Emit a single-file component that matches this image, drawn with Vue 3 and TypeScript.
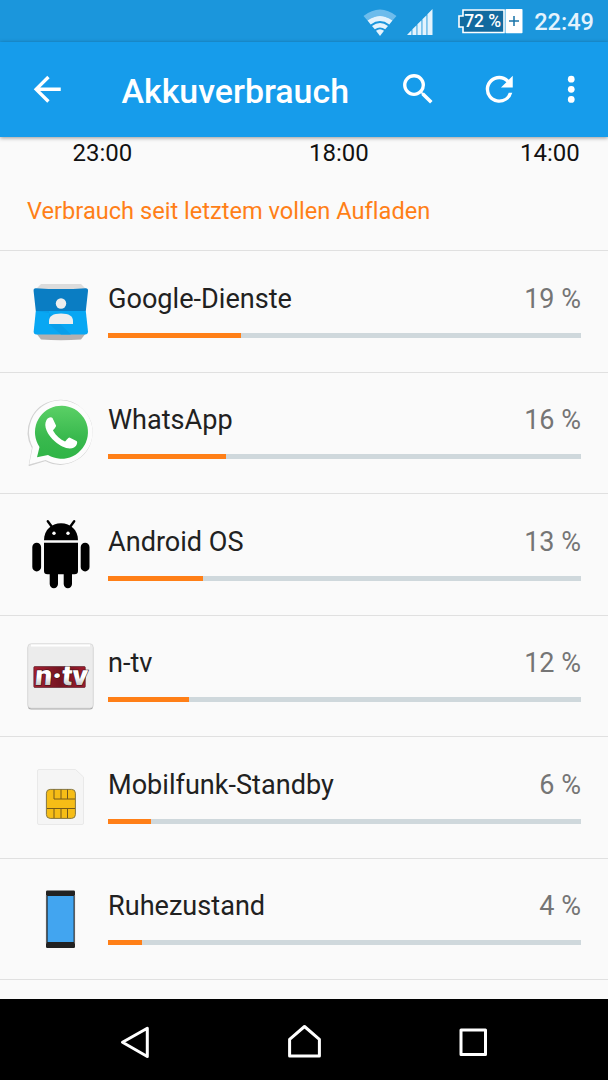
<script setup lang="ts">
interface Consumer {
  id: string
  name: string
  percent: number
  fill: number
}

const consumers: Consumer[] = [
  { id: 'google', name: 'Google-Dienste', percent: 19, fill: 132.7 },
  { id: 'whatsapp', name: 'WhatsApp', percent: 16, fill: 118.3 },
  { id: 'android', name: 'Android OS', percent: 13, fill: 94.6 },
  { id: 'ntv', name: 'n-tv', percent: 12, fill: 81 },
  { id: 'sim', name: 'Mobilfunk-Standby', percent: 6, fill: 43 },
  { id: 'idle', name: 'Ruhezustand', percent: 4, fill: 34 },
]

const hours: string[] = ['23:00', '18:00', '14:00']
</script>

<template>
  <div class="screen">
    <div class="status">
      <svg class="wifi" width="34" height="28" viewBox="0 0 34 28">
        <path d="M.5 7Q17-6 33.500 7L29.500 11.500Q17 2.500 4.500 11.500Z" fill="#6dbcec" />
        <path d="M4.500 11.500Q17 2.500 29.500 11.500L26.300 15.400Q17 8.700 7.700 15.400Z" fill="#e4f3fd" />
        <path d="M9 17Q17 11 25 17L22.200 20.300Q17 16.500 11.800 20.300Z" fill="#e4f3fd" />
        <path d="M13 21.800Q17 18.800 21 21.800L17 27Z" fill="#e4f3fd" />
      </svg>
      <svg class="signal" width="26" height="26" viewBox="0 0 26 26">
        <path d="M0 26L4.500 21.200V26ZM5.400 20.300L9.500 16.200V26H5.400ZM10.400 15.300L14.500 11.200V26H10.400ZM15.400 10.300L19.500 6.200V26H15.400ZM20.400 5.300L25.500 0V26H20.400Z" fill="#e4f3fd" />
      </svg>
      <div class="battery">
        <svg width="65" height="25" viewBox="0 0 65 25">
          <path d="M5 1H46V23.500H5V18H1V7H5Z" fill="#126a9f" stroke="#fff" stroke-width="1.600" />
          <rect x="47.500" y="0" width="17" height="24.300" rx=".8" fill="#fff" />
          <path d="M51 12H61M56 7V17" stroke="#1873a8" stroke-width="1.500" />
        </svg>
        <span class="level">72 %</span>
      </div>
      <span class="clock">22:49</span>
    </div>

    <header class="toolbar">
      <svg class="tool" viewBox="0 0 24 24"><path d="M20 11H7.830l5.590-5.590L12 4l-8 8 8 8 1.410-1.410L7.830 13H20z" /></svg>
      <h1>Akkuverbrauch</h1>
      <svg class="tool search" viewBox="0 0 24 24"><path d="M15.500 14h-.79l-.28-.27A6.471 6.471 0 0 0 16 9.500 6.500 6.500 0 1 0 9.500 16c1.610 0 3.090-.59 4.230-1.570l.27.28v.79l5 4.990L20.490 19l-4.990-5zm-6 0C7.010 14 5 11.990 5 9.500S7.010 5 9.500 5 14 7.010 14 9.500 11.990 14 9.500 14z" /></svg>
      <svg class="tool refresh" viewBox="0 0 24 24"><path d="M17.650 6.350A7.958 7.958 0 0 0 12 4a8 8 0 1 0 7.730 10h-2.080A5.990 5.990 0 0 1 12 18c-3.310 0-6-2.690-6-6s2.690-6 6-6c1.660 0 3.140.69 4.220 1.780L13 11h7V4l-2.350 2.350z" /></svg>
      <svg class="tool more" viewBox="0 0 24 24"><circle cx="12" cy="6" r="2" /><circle cx="12" cy="12" r="2" /><circle cx="12" cy="18" r="2" /></svg>
    </header>

    <main>
      <div class="hours"><span v-for="h in hours" :key="h">{{ h }}</span></div>
      <h2>Verbrauch seit letztem vollen Aufladen</h2>
      <ul>
        <li v-for="c in consumers" :key="c.id">
          <svg class="icon" width="68" height="68" viewBox="0 0 68 68">
            <g v-if="c.id === 'google'">
              <path d="M14 6H54L59 11H9Z" fill="#dcdcdc" />
              <path d="M9 55H59L54 61.500Q34 63 14 61.500Z" fill="#b4b0af" />
              <path d="M8.800 33L6.600 13Q6.300 10 9 10.200Q34 12 58.500 10.200Q61.300 10 61 13L58.800 33Z" fill="#0a7dc3" />
              <path d="M8.800 33H58.800L61 53.500Q61 56.500 58 56.500H9.500Q6.500 56.500 6.700 53.500Z" fill="#08a7f3" />
              <path d="M9 33H22V46L34 56.500H44L22 35Z" fill="#089eea" />
              <circle cx="34" cy="25.500" r="5.200" fill="#eee" />
              <path d="M22 46V43Q22 35.500 34 35.500Q46 35.500 46 43V46Z" fill="#eee" />
            </g>
            <g v-else-if="c.id === 'whatsapp'">
              <path d="M2.200 65.500L5.500 48A31.800 31.800 0 1 1 18.500 60.500Z" fill="#d0d0d0" stroke="#d2d2d2" stroke-width="1.200" stroke-linejoin="round" />
              <path d="M2.200 64.500L5.700 47A31.800 31.800 0 1 1 18.500 60Z" fill="#fcfcfc" />
              <path d="M10 57.200L12.500 47A26.500 26.500 0 1 1 21 55Z" fill="url(#waGreen)" />
              <path d="M19.500 20C21 17.500 24 16.500 25.500 18L29 25.500C29.500 27 26 30 26 30.500C29 36 33.500 39.500 38 41.500C39 41 41 37.500 42.500 37.500L49.500 41C51 42 50 46 47 47.500C42 50 34 47 28 41.500C20.500 35 16 26 19.500 20Z" fill="#fff" />
              <defs>
                <linearGradient id="waGreen" x1="0" y1="0" x2="0" y2="1">
                  <stop offset="0" stop-color="#5bd066" /><stop offset=".6" stop-color="#39b94e" /><stop offset="1" stop-color="#2fb446" />
                </linearGradient>
              </defs>
            </g>
            <g v-else-if="c.id === 'android'">
              <path d="M17 19.300C17 9 24.500 2.300 34 2.300S51 9 51 19.300Z" />
              <path d="M20.800 .3L25 6M47.200 .3L43 6" stroke="#000" stroke-width="2.400" stroke-linecap="round" />
              <path d="M17 21.700H51V50Q51 53.200 47.500 53.200H45V63A4.150 4.150 0 0 1 36.700 63V53.200H31V63A4.150 4.150 0 0 1 22.700 63V53.200H20.500Q17 53.200 17 50Z" />
              <rect x="5.300" y="21.700" width="8.800" height="28.700" rx="4.400" />
              <rect x="53.700" y="21.700" width="8.800" height="28.700" rx="4.400" />
              <circle cx="27" cy="12.300" r="1.700" fill="#fff" /><circle cx="41" cy="12.300" r="1.700" fill="#fff" />
            </g>
            <g v-else-if="c.id === 'ntv'">
              <rect x=".8" y="1.500" width="65.400" height="65" rx="3.500" fill="#aaa" />
              <rect x=".8" y=".7" width="65.400" height="64.500" rx="3.500" fill="#ececec" stroke="#d2d2d2" stroke-width=".7" />
              <path d="M4 2.500H63" stroke="#fff" stroke-width="2" />
              <rect x="6.800" y="23.500" width="51.500" height="21" rx="1" fill="url(#ntvRed)" stroke="#4d1a22" stroke-width=".6" />
              <text class="ntv-mark" transform="translate(7.500 41.800) skewX(-5)" textLength="52.500" lengthAdjust="spacingAndGlyphs">n·tv</text>
              <defs>
                <linearGradient id="ntvRed"><stop offset="0" stop-color="#a51f30" /><stop offset=".5" stop-color="#741421" /><stop offset="1" stop-color="#9d1b2c" /></linearGradient>
                <linearGradient id="ntvWhite" x1="0" y1="0" x2="0" y2="1"><stop offset=".55" stop-color="#fff" /><stop offset=".85" stop-color="#bbb" /></linearGradient>
              </defs>
            </g>
            <g v-else-if="c.id === 'sim'">
              <path d="M12 5.500H48.500L56.500 13V59Q56.500 60.500 55 60.500H12Q10.500 60.500 10.500 59V7Q10.500 5.500 12 5.500Z" fill="#f5f5f5" stroke="#e9e9e9" />
              <rect x="19.400" y="25.400" width="29" height="29" rx="3.800" fill="#f6bd16" stroke="#857641" stroke-width="1" />
              <path d="M27 25.500V35H48M34 25.500V35M40.500 25.500V35M20 44.500H48M27 44.500V54M34 44.500V54M40.500 44.500V54" fill="none" stroke="#75591a" stroke-width="1" />
            </g>
            <g v-else>
              <rect x="19" y="4.500" width="29" height="57.500" rx="1.200" fill="#222" />
              <path d="M19.400 9V57.500M47.600 9V57.500" stroke="#777" stroke-width=".8" />
              <rect x="20.600" y="10" width="26" height="46" fill="#42a5f0" />
            </g>
          </svg>
          <div class="body">
            <div class="line"><span class="name">{{ c.name }}</span><span class="percent">{{ c.percent }} %</span></div>
            <div class="track"><div class="fill" :style="{ width: c.fill + 'px' }"></div></div>
          </div>
        </li>
      </ul>
    </main>

    <nav>
      <svg width="608" height="81" viewBox="0 0 608 81" fill="none" stroke="#fff" stroke-width="3" stroke-linejoin="round">
        <path d="M122.500 43.300L147.300 29.200V57.500Z" />
        <path d="M289.600 57V40.300L304.500 27.500L319.400 40.300V57Z" />
        <rect x="461" y="31" width="24.500" height="24.500" />
      </svg>
    </nav>
  </div>
</template>

<style>
body {
  margin: 0;
  background: #fafafa;
}
</style>

<style scoped>
.screen {
  width: 608px;
  height: 1080px;
  display: flex;
  flex-direction: column;
  overflow: hidden;
  background: #fafafa;
  color: #212121;
  font-family: Roboto, "Noto Sans", sans-serif;
  font-variant-ligatures: none;
}
.status {
  flex: none;
  height: 42px;
  box-sizing: border-box;
  padding: 9px 14px 0 0;
  display: flex;
  align-items: flex-start;
  justify-content: flex-end;
  background: #1b96dc;
}
.signal { margin-left: 10px; }
.battery {
  position: relative;
  width: 65px;
  height: 25px;
  margin-left: 25px;
}
.level {
  position: absolute;
  left: 6.5px;
  top: 2px;
  line-height: 20px;
  font-size: 17.5px;
  font-weight: 500;
  color: #fff;
  white-space: nowrap;
}
.clock {
  margin-left: 11.5px;
  font-size: 23.6px;
  line-height: 26px;
  font-weight: 500;
  color: #e4f3fd;
}
.toolbar {
  flex: none;
  z-index: 1;
  height: 95px;
  box-sizing: border-box;
  padding: 0 17px 0 27px;
  display: flex;
  align-items: center;
  background: #169ceb;
  box-shadow: 0 1px 4px rgba(0, 0, 0, .4);
}
.tool {
  flex: none;
  width: 40.5px;
  height: 40.5px;
  fill: #fff;
}
h1 {
  margin: 5px 0 0 54px;
  width: 277px;
  font-size: 33.9px;
  line-height: 40px;
  font-weight: 500;
  color: #fff;
}
.refresh { margin-left: 40.5px; }
.more { margin-left: 30.7px; }
main {
  flex: 1;
  min-height: 0;
}
.hours {
  height: 33px;
  padding: 2px 28px 0 72.5px;
  box-sizing: border-box;
  display: grid;
  grid-template-columns: 236.5px 211px 60px;
  font-size: 24px;
  line-height: 28px;
  color: #111;
}
h2 {
  margin: 0;
  height: 80.4px;
  padding: 27px 0 0 27px;
  box-sizing: border-box;
  font-size: 23.63px;
  line-height: 28px;
  font-weight: 400;
  color: #ff7f17;
}
ul {
  list-style: none;
  margin: 0;
  padding: 0;
  border-bottom: 1px solid #e0e0e0;
}
li {
  height: 121.5px;
  box-sizing: border-box;
  border-top: 1px solid #e0e0e0;
  padding: 27px 27px 0;
  display: flex;
}
.icon {
  flex: none;
  overflow: visible;
}
.body {
  flex: 1;
  margin-left: 13px;
  padding-top: .4px;
}
.line {
  display: flex;
  justify-content: space-between;
  height: 54px;
  padding-top: 4px;
  box-sizing: border-box;
  font-size: 27.1px;
  line-height: 32px;
}
.percent {
  font-size: 27px;
  color: #757575;
}
.track {
  height: 5px;
  background: #cfd8dc;
}
.fill {
  height: 100%;
  background: #ff7f17;
}
.ntv-mark {
  font: 900 28px Roboto, sans-serif;
  fill: url(#ntvWhite);
  stroke: #321014;
  stroke-width: 1;
  paint-order: stroke;
}
nav {
  flex: none;
  height: 81px;
  background: #000;
}
nav svg { display: block; }
</style>
